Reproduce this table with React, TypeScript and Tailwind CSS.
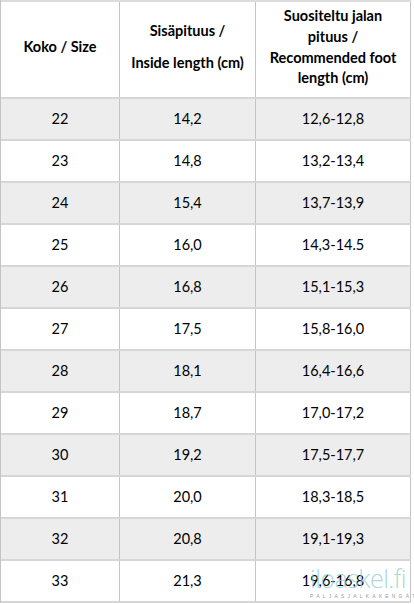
import React from "react";

const rows: [string, string, string][] = [
    ["22", "14,2", "12,6-12,8"],
    ["23", "14,8", "13,2-13,4"],
    ["24", "15,4", "13,7-13,9"],
    ["25", "16,0", "14,3-14.5"],
    ["26", "16,8", "15,1-15,3"],
    ["27", "17,5", "15,8-16,0"],
    ["28", "18,1", "16,4-16,6"],
    ["29", "18,7", "17,0-17,2"],
    ["30", "19,2", "17,5-17,7"],
    ["31", "20,0", "18,3-18,5"],
    ["32", "20,8", "19,1-19,3"],
    ["33", "21,3", "19,6-16,8"],
];

export default function App() {
    return (
        <div
            className="relative w-[414px] h-[604px] bg-white overflow-hidden text-black"
            style={{ fontFamily: "Lato, 'Noto Sans', sans-serif" }}
        >
            <div className="w-[411px] border-l border-[#c4c4c4]">
                {/* header */}
                <div className="flex h-[97px] border-t-2 border-[#dcdcdc] font-bold text-[14.5px] leading-[20.7px]">
                    <div className="w-[119px] border-r border-[#c4c4c4] flex items-center justify-center pb-1">
                        Koko / Size
                    </div>
                    <div className="w-[136px] border-r border-[#c4c4c4] flex flex-col items-center justify-center gap-[11px] pb-1 text-center">
                        <p>Sisäpituus /</p>
                        <p>Inside length (cm)</p>
                    </div>
                    <div className="w-[155px] border-r border-[#c4c4c4] flex items-center justify-center text-center pb-1">
                        <p>
                            Suositeltu jalan
                            <br />
                            pituus /
                            <br />
                            Recommended foot
                            <br />
                            length (cm)
                        </p>
                    </div>
                </div>

                {rows.map((r, i) => (
                    <div
                        key={r[0]}
                        className={`flex h-[42px] border-t-2 border-[#d6d6d6] text-[14.5px] ${i % 2 === 0 ? "bg-[#ededed]" : "bg-white"}`}
                    >
                        <div className="w-[119px] border-r border-[#c4c4c4] flex items-center justify-center">
                            {r[0]}
                        </div>
                        <div className="w-[136px] border-r border-[#c4c4c4] flex items-center justify-center">
                            {r[1]}
                        </div>
                        <div className="w-[155px] border-r border-[#c4c4c4] flex items-center justify-center">
                            {r[2]}
                        </div>
                    </div>
                ))}
                <div className="border-t-2 border-[#d6d6d6]" />
            </div>

            {/* watermark */}
            <div className="absolute left-[310px] top-[566px] pointer-events-none">
                <div
                    className="text-[25px] font-light leading-none tracking-[-0.5px] text-[#8fd0d4]/80"
                    style={{ fontFamily: "'Open Sans', sans-serif" }}
                >
                    iloaskel.fi
                </div>
                <div
                    className="mt-[3px] text-[5px] leading-none tracking-[3.2px] text-[#9a9a9a]"
                    style={{ fontFamily: "'Liberation Sans', sans-serif" }}
                >
                    PALJASJALKAKENGÄT
                </div>
            </div>
        </div>
    );
}
